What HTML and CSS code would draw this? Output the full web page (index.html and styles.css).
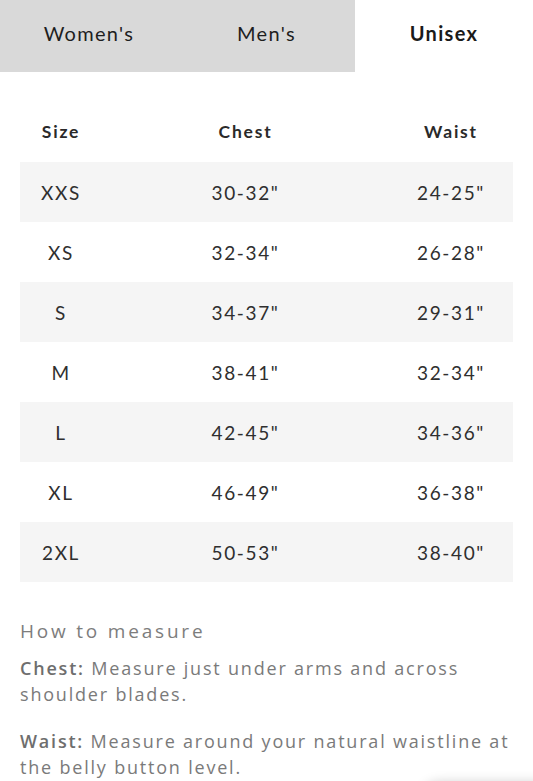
FILE: index.html
```html
<!DOCTYPE html>
<html>
<head>
<meta charset="utf-8">
<link rel="stylesheet" href="styles.css">
</head>
<body>
<div class="tabs">
  <div class="tab">Women's</div>
  <div class="tab">Men's</div>
  <div class="tab active">Unisex</div>
</div>
<div class="table">
  <div class="row head"><span>Size</span><span>Chest</span><span>Waist</span></div>
  <div class="row shade"><span>XXS</span><span>30-32"</span><span>24-25"</span></div>
  <div class="row"><span>XS</span><span>32-34"</span><span>26-28"</span></div>
  <div class="row shade"><span>S</span><span>34-37"</span><span>29-31"</span></div>
  <div class="row"><span>M</span><span>38-41"</span><span>32-34"</span></div>
  <div class="row shade"><span>L</span><span>42-45"</span><span>34-36"</span></div>
  <div class="row"><span>XL</span><span>46-49"</span><span>36-38"</span></div>
  <div class="row shade"><span>2XL</span><span>50-53"</span><span>38-40"</span></div>
</div>
<div class="measure">
  <h2 class="measure-title">How to measure</h2>
  <p class="measure-text"><b>Chest:</b> Measure just under arms and across shoulder blades.</p>
  <p class="measure-text"><b>Waist:</b> Measure around your natural waistline at the belly button level.</p>
</div>
<div class="fab-shadow"></div>
</body>
</html>
```
FILE: styles.css
```css
html, body {
  margin: 0;
  padding: 0;
  background: #ffffff;
  overflow: hidden;
}
body {
  width: 533px;
  height: 781px;
  position: relative;
  font-family: Lato, "Open Sans", sans-serif;
  color: #2b2b2b;
}
.tabs {
  display: grid;
  grid-template-columns: 178px 177px 178px;
  height: 72px;
}
.tab {
  background: #d9d9d9;
  display: flex;
  align-items: center;
  justify-content: center;
  font-size: 20px;
  letter-spacing: 1.3px;
  color: #1e1e1e;
  padding-bottom: 6px;
  box-sizing: border-box;
}
.tab.active {
  background: #ffffff;
  font-weight: 700;
  color: #1a1a1a;
}
.table {
  margin: 28px 20px 0 20px;
}
.row {
  display: grid;
  grid-template-columns: 82px 287px 124px;
  height: 60px;
  align-items: center;
  text-align: center;
  font-size: 19px;
  letter-spacing: 1.6px;
  color: #2f2f2f;
}
.row.head {
  height: 62px;
  font-weight: 700;
  font-size: 17.5px;
  letter-spacing: 1.8px;
  color: #2a2a2a;
}
.row.shade {
  background: #f5f5f5;
}
.measure {
  padding: 36px 20px 0 20px;
  color: #7a7a7a;
  font-family: "Open Sans", Lato, sans-serif;
}
.measure-title {
  margin: 0 0 11px 0;
  font-size: 19px;
  font-weight: 400;
  letter-spacing: 2.8px;
  line-height: 26px;
  color: #7d7d7d;
}
.measure-text {
  margin: 0 0 21px 0;
  font-size: 18px;
  line-height: 26px;
  letter-spacing: 1.8px;
  color: #7a7a7a;
}
.measure-text b {
  font-weight: 600;
  color: #6e6e6e;
}
.fab-shadow {
  position: absolute;
  left: 420px;
  top: 782px;
  width: 140px;
  height: 40px;
  border-radius: 20px;
  box-shadow: 0 0 12px rgba(0,0,0,0.18);
}
```
